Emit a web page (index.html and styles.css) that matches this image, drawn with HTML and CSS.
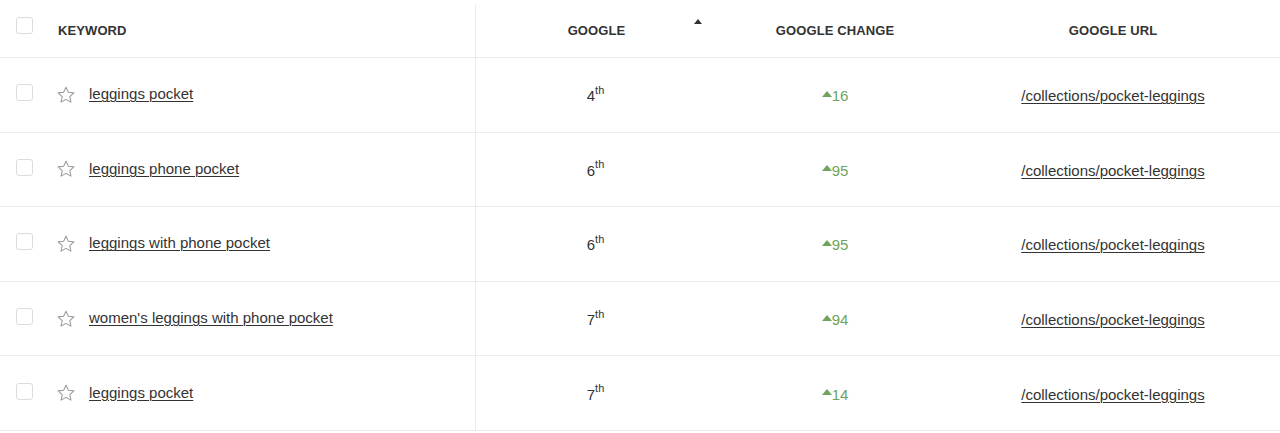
FILE: index.html
```html
<!DOCTYPE html>
<html lang="en">
<head>
<meta charset="utf-8">
<title>Keywords</title>
<link rel="stylesheet" href="styles.css">
</head>
<body>
<div class="table">
  <div class="row head">
    <div class="cell kw">
      <span class="check"></span>
      <span class="label">KEYWORD</span>
    </div>
    <div class="cell google sortable">
      <span></span>
      <span class="label">GOOGLE</span>
      <span class="sort"></span>
    </div>
    <div class="cell center"><span class="label">GOOGLE CHANGE</span></div>
    <div class="cell center url"><span class="label">GOOGLE URL</span></div>
  </div>

  <div class="row">
    <div class="cell kw">
      <span class="check"></span>
      <svg class="star" viewBox="0 0 24 24"><path d="M12 2.6l2.85 6.1 6.65.75-4.95 4.55 1.35 6.6L12 17.3l-5.9 3.3 1.35-6.6L2.5 9.45l6.65-.75z"/></svg>
      <a href="#">leggings pocket</a>
    </div>
    <div class="cell center rank">4<sup>th</sup></div>
    <div class="cell center change"><span class="up"></span>16</div>
    <div class="cell center url"><a href="#">/collections/pocket-leggings</a></div>
  </div>

  <div class="row">
    <div class="cell kw">
      <span class="check"></span>
      <svg class="star" viewBox="0 0 24 24"><path d="M12 2.6l2.85 6.1 6.65.75-4.95 4.55 1.35 6.6L12 17.3l-5.9 3.3 1.35-6.6L2.5 9.45l6.65-.75z"/></svg>
      <a href="#">leggings phone pocket</a>
    </div>
    <div class="cell center rank">6<sup>th</sup></div>
    <div class="cell center change"><span class="up"></span>95</div>
    <div class="cell center url"><a href="#">/collections/pocket-leggings</a></div>
  </div>

  <div class="row">
    <div class="cell kw">
      <span class="check"></span>
      <svg class="star" viewBox="0 0 24 24"><path d="M12 2.6l2.85 6.1 6.65.75-4.95 4.55 1.35 6.6L12 17.3l-5.9 3.3 1.35-6.6L2.5 9.45l6.65-.75z"/></svg>
      <a href="#">leggings with phone pocket</a>
    </div>
    <div class="cell center rank">6<sup>th</sup></div>
    <div class="cell center change"><span class="up"></span>95</div>
    <div class="cell center url"><a href="#">/collections/pocket-leggings</a></div>
  </div>

  <div class="row">
    <div class="cell kw">
      <span class="check"></span>
      <svg class="star" viewBox="0 0 24 24"><path d="M12 2.6l2.85 6.1 6.65.75-4.95 4.55 1.35 6.6L12 17.3l-5.9 3.3 1.35-6.6L2.5 9.45l6.65-.75z"/></svg>
      <a href="#">women's leggings with phone pocket</a>
    </div>
    <div class="cell center rank">7<sup>th</sup></div>
    <div class="cell center change"><span class="up"></span>94</div>
    <div class="cell center url"><a href="#">/collections/pocket-leggings</a></div>
  </div>

  <div class="row">
    <div class="cell kw">
      <span class="check"></span>
      <svg class="star" viewBox="0 0 24 24"><path d="M12 2.6l2.85 6.1 6.65.75-4.95 4.55 1.35 6.6L12 17.3l-5.9 3.3 1.35-6.6L2.5 9.45l6.65-.75z"/></svg>
      <a href="#">leggings pocket</a>
    </div>
    <div class="cell center rank">7<sup>th</sup></div>
    <div class="cell center change"><span class="up"></span>14</div>
    <div class="cell center url"><a href="#">/collections/pocket-leggings</a></div>
  </div>
</div>
</body>
</html>
```

FILE: styles.css
```css
html, body {
  margin: 0;
  padding: 0;
  background: #fff;
}
body {
  font-family: "Liberation Sans", Arial, Helvetica, sans-serif;
  color: #333;
  font-size: 15px;
}
.table {
  display: flex;
  flex-direction: column;
  width: 1280px;
}
.row {
  display: grid;
  grid-template-columns: 476px 241px 236px 327px;
  height: 74.6px;
  box-sizing: border-box;
  border-bottom: 1px solid #ececec;
}
.row.head {
  height: 58px;
  border-bottom: 1px solid #ececec;
}
.cell {
  display: flex;
  align-items: center;
  min-width: 0;
}
.cell.kw {
  border-right: 1px solid #ececec;
  padding-left: 16px;
}
.head .cell.kw {
  border-right: none;
  box-shadow: inset -1px 0 0 #ececec;
  clip-path: inset(4px 0 0 0);
}
.center {
  justify-content: center;
}
.url {
  padding-right: 7px;
}
.label {
  font-size: 13px;
  font-weight: bold;
  color: #333;
  letter-spacing: 0.1px;
}
.head .label {
  margin-top: 4px;
}
.head .kw .label {
  margin-left: 25px;
}
.check {
  display: block;
  width: 17px;
  height: 17px;
  box-sizing: border-box;
  border: 1px solid #dcdcdc;
  border-radius: 3px;
  background: #fff;
  flex: none;
  margin-top: -4px;
}
.head .check {
  margin-top: -6px;
}
.star {
  width: 20px;
  height: 20px;
  margin-left: 23px;
  flex: none;
  fill: none;
  stroke: #9a9a9a;
  stroke-width: 1.25;
  stroke-linejoin: round;
}
.kw a {
  margin-left: 13px;
  margin-top: -2px;
}
a {
  color: #333;
  text-decoration: underline;
  text-underline-offset: 2px;
  text-decoration-thickness: 1px;
}
.url a {
  margin-top: 2px;
}
.google {
  display: grid;
  grid-template-columns: 1fr auto 1fr;
  align-items: center;
}
.sort {
  justify-self: end;
  align-self: start;
  margin-top: 19px;
  margin-right: 15px;
  width: 0;
  height: 0;
  border-left: 4.5px solid transparent;
  border-right: 4.5px solid transparent;
  border-bottom: 5px solid #333;
}
.rank {
  font-size: 15px;
  margin-top: 2px;
  margin-left: -2px;
}
.rank sup {
  font-size: 11px;
  vertical-align: 0;
  position: relative;
  top: -6px;
  margin-left: 0;
}
.change {
  color: #6ea35c;
  font-size: 15px;
  margin-top: 2px;
}
.up {
  width: 0;
  height: 0;
  border-left: 5px solid transparent;
  border-right: 5px solid transparent;
  border-bottom: 6px solid #6ea35c;
  margin-top: -4px;
}
```
